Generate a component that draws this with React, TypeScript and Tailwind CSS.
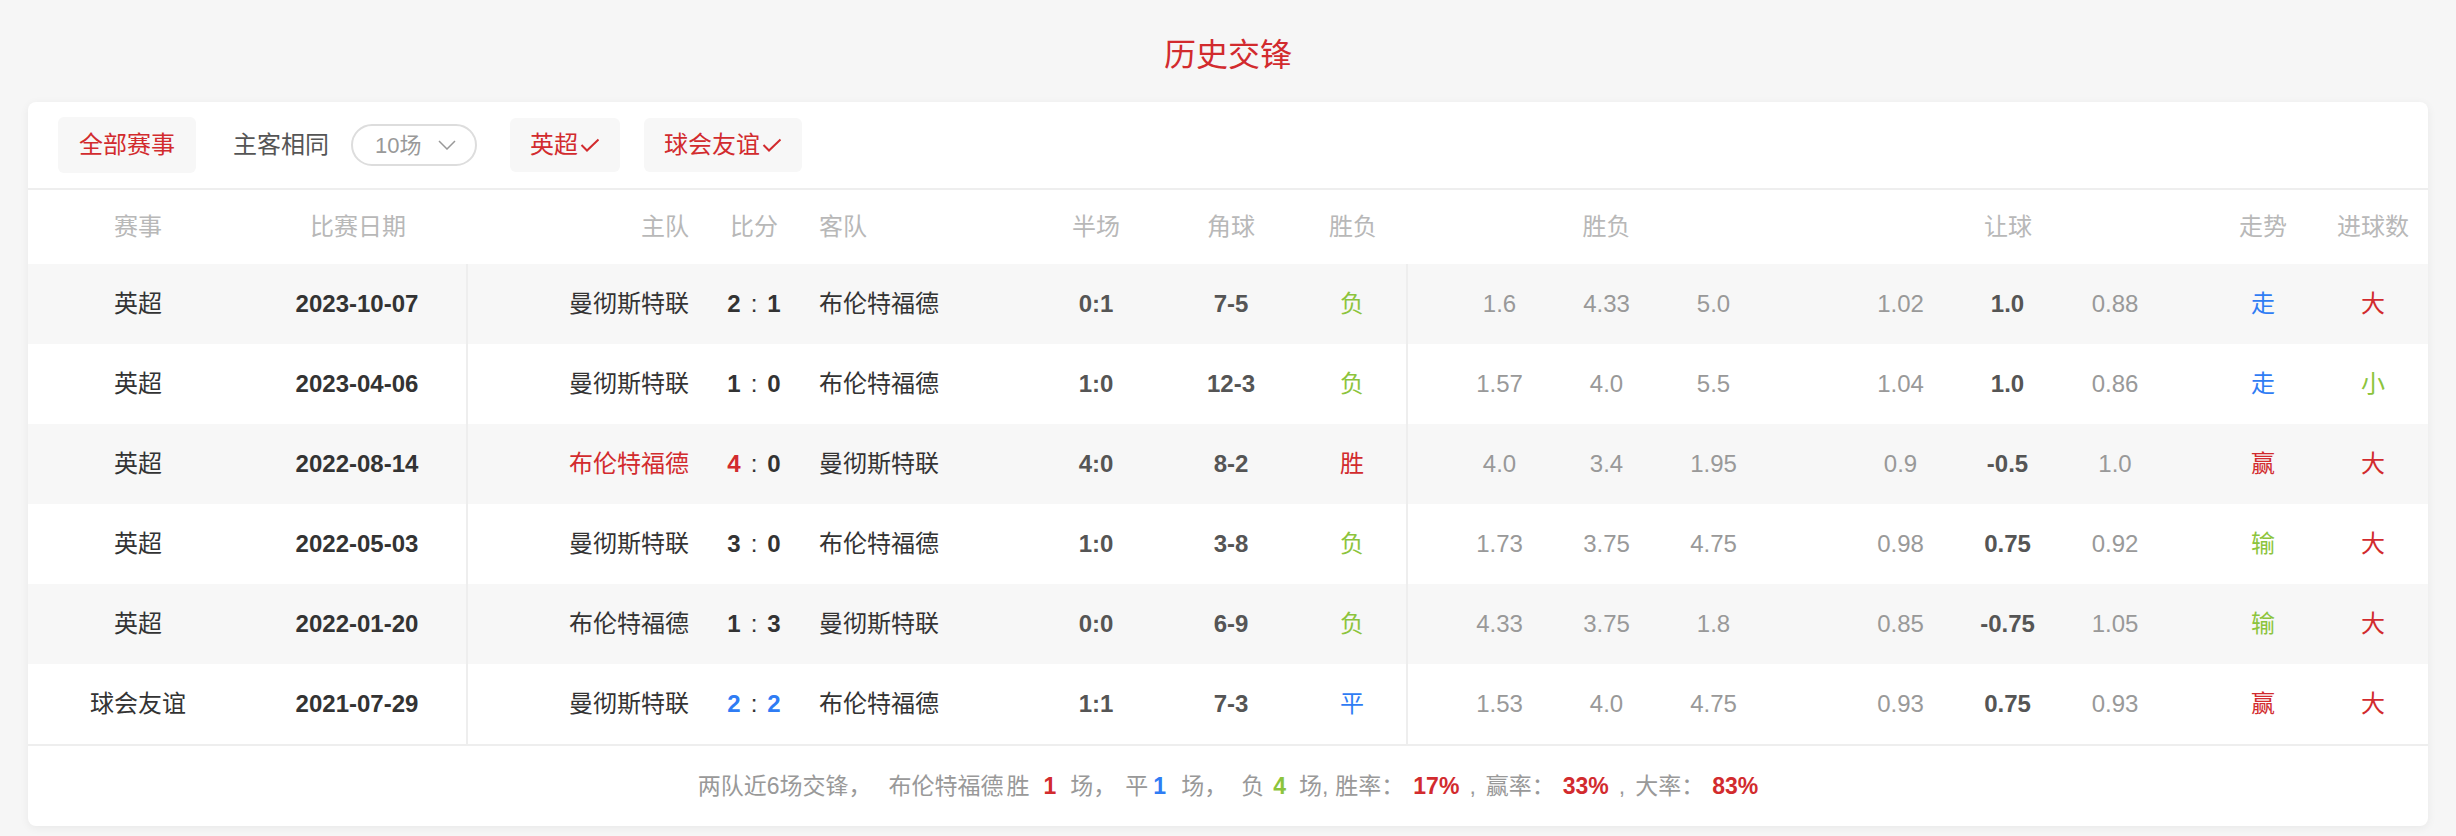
import type { ReactNode } from "react";
import clsx from "clsx";

const ROW = "grid grid-cols-[220px_220px_221px_130px_209px_136px_134px_110px_38px_107px_107px_107px_80px_107px_107px_108px_39px_110px_110px]";

const RED = "text-[#d22b2e]";
const GREEN = "text-[#8cc43c]";
const BLUE = "text-[#2f7cf4]";

type Match = {
    league: string
    date: string
    home: string
    away: string
    hs: number
    as: number
    half: string
    corner: string
    result: string
    odds: string[]
    handicap: string[]
    trend: string
    goals: string
    homeRed?: boolean
    draw?: boolean
}

const matches: Match[] = [
    { league: '英超', date: '2023-10-07', home: '曼彻斯特联', away: '布伦特福德', hs: 2, as: 1, half: '0:1', corner: '7-5', result: '负', odds: ['1.6', '4.33', '5.0'], handicap: ['1.02', '1.0', '0.88'], trend: '走', goals: '大' },
    { league: '英超', date: '2023-04-06', home: '曼彻斯特联', away: '布伦特福德', hs: 1, as: 0, half: '1:0', corner: '12-3', result: '负', odds: ['1.57', '4.0', '5.5'], handicap: ['1.04', '1.0', '0.86'], trend: '走', goals: '小' },
    { league: '英超', date: '2022-08-14', home: '布伦特福德', away: '曼彻斯特联', hs: 4, as: 0, half: '4:0', corner: '8-2', result: '胜', odds: ['4.0', '3.4', '1.95'], handicap: ['0.9', '-0.5', '1.0'], trend: '赢', goals: '大', homeRed: true },
    { league: '英超', date: '2022-05-03', home: '曼彻斯特联', away: '布伦特福德', hs: 3, as: 0, half: '1:0', corner: '3-8', result: '负', odds: ['1.73', '3.75', '4.75'], handicap: ['0.98', '0.75', '0.92'], trend: '输', goals: '大' },
    { league: '英超', date: '2022-01-20', home: '布伦特福德', away: '曼彻斯特联', hs: 1, as: 3, half: '0:0', corner: '6-9', result: '负', odds: ['4.33', '3.75', '1.8'], handicap: ['0.85', '-0.75', '1.05'], trend: '输', goals: '大' },
    { league: '球会友谊', date: '2021-07-29', home: '曼彻斯特联', away: '布伦特福德', hs: 2, as: 2, half: '1:1', corner: '7-3', result: '平', odds: ['1.53', '4.0', '4.75'], handicap: ['0.93', '0.75', '0.93'], trend: '赢', goals: '大', draw: true },
]

const tone = (s: string) => {
    if (s === '胜' || s === '赢' || s === '大') return RED
    if (s === '负' || s === '输' || s === '小') return GREEN
    return BLUE
}

function Cell({ children, className }: { children?: ReactNode, className?: string }) {
    return <div className={clsx("flex h-full items-center justify-center", className)}>{children}</div>
}

function Check() {
    return (
        <svg width="20" height="14" viewBox="0 0 20 14" className="ml-[2px]">
            <polyline points="1.5,7 7,12.5 18.5,1.5" fill="none" stroke="#d22b2e" strokeWidth="2" />
        </svg>
    )
}

export default function App() {
    return (
        <div className="min-h-[836px] bg-[#f6f6f6] pb-[10px] font-['Liberation_Sans','Noto_Sans_CJK_SC',sans-serif]">
            <h1 className="flex h-[102px] items-center justify-center pt-2 text-[32px] text-[#d22b2e]">历史交锋</h1>

            <div className="mx-[28px] overflow-hidden rounded-lg bg-white shadow-[0_2px_10px_rgba(0,0,0,0.06)]">

                {/* filters */}
                <div className="flex h-[88px] items-center border-b-2 border-[#eeeeee] pl-[30px] text-[24px]">
                    <button className="flex h-[56px] items-center rounded-md bg-[#f7f7f7] px-[21px] text-[#d22b2e]">全部赛事</button>
                    <span className="ml-[37px] text-[#555]">主客相同</span>
                    <div className="ml-[22px] flex h-[42px] w-[126px] items-center rounded-full border-2 border-[#dddddd] pl-[22px] text-[22px] text-[#999]">
                        10场
                        <svg width="18" height="10" viewBox="0 0 18 10" className="ml-[17px]">
                            <polyline points="1,1 9,9 17,1" fill="none" stroke="#999" strokeWidth="1.5" />
                        </svg>
                    </div>
                    <button className="ml-[33px] flex h-[54px] items-center rounded-md bg-[#f7f7f7] px-[20px] text-[#d22b2e]">英超<Check /></button>
                    <button className="ml-[24px] flex h-[54px] items-center rounded-md bg-[#f7f7f7] px-[20px] text-[#d22b2e]">球会友谊<Check /></button>
                </div>

                {/* header */}
                <div className={clsx(ROW, "h-[74px] text-[24px] text-[#b8b8b8]")}>
                    <Cell>赛事</Cell>
                    <Cell>比赛日期</Cell>
                    <Cell className="justify-end">主队</Cell>
                    <Cell>比分</Cell>
                    <Cell className="justify-start">客队</Cell>
                    <Cell>半场</Cell>
                    <Cell>角球</Cell>
                    <Cell>胜负</Cell>
                    <Cell />
                    <Cell className="col-span-3">胜负</Cell>
                    <Cell />
                    <Cell className="col-span-3">让球</Cell>
                    <Cell />
                    <Cell>走势</Cell>
                    <Cell>进球数</Cell>
                </div>

                {/* rows */}
                {matches.map((m, i) => (
                    <div key={m.date} className={clsx(ROW, "h-[80px] text-[24px] text-[#333]", i % 2 === 0 ? 'bg-[#f7f7f7]' : 'bg-white')}>
                        <Cell>{m.league}</Cell>
                        <Cell className="border-r-2 border-[#eeeeee] font-bold">{m.date}</Cell>
                        <Cell className={clsx("justify-end", m.homeRed && RED)}>{m.home}</Cell>
                        <Cell>
                            <span className={clsx("font-bold", m.homeRed && RED, m.draw && BLUE)}>{m.hs}</span>
                            <span className="mx-[10px]">:</span>
                            <span className={clsx("font-bold", m.draw && BLUE)}>{m.as}</span>
                        </Cell>
                        <Cell className="justify-start">{m.away}</Cell>
                        <Cell className="font-bold text-[#555]">{m.half}</Cell>
                        <Cell className="font-bold text-[#555]">{m.corner}</Cell>
                        <Cell className={clsx("border-r-2 border-[#eeeeee]", tone(m.result))}>{m.result}</Cell>
                        <Cell />
                        {m.odds.map((o, k) => (
                            <Cell key={k} className="text-[#999]">{o}</Cell>
                        ))}
                        <Cell />
                        {m.handicap.map((h, k) => (
                            <Cell key={k} className={k === 1 ? "font-bold text-[#555]" : "text-[#999]"}>{h}</Cell>
                        ))}
                        <Cell />
                        <Cell className={tone(m.trend)}>{m.trend}</Cell>
                        <Cell className={tone(m.goals)}>{m.goals}</Cell>
                    </div>
                ))}

                {/* summary */}
                <div className="flex h-[82px] items-center justify-center whitespace-pre border-t-2 border-[#eeeeee] text-[23px] text-[#999]">
                    <span>两队近6场交锋，</span>
                    <span className="ml-[17px]">布伦特福德</span>
                    <span className="ml-[3px]">胜</span>
                    <span className={clsx("mx-[14px] font-bold", RED)}>1</span>
                    <span>场，</span>
                    <span className="ml-[9px]">平</span>
                    <span className={clsx("ml-[5px] font-bold", BLUE)}>1</span>
                    <span className="ml-[15px]">场，</span>
                    <span className="ml-[14px]">负</span>
                    <span className={clsx("ml-[9px] font-bold", GREEN)}>4</span>
                    <span className="ml-[13px]">场,</span>
                    <span className="ml-[7px]">胜率：</span>
                    <span className={clsx("ml-[9px] font-bold", RED)}>17%</span>
                    <span className="ml-[10px]">,</span>
                    <span className="ml-[10px]">赢率：</span>
                    <span className={clsx("ml-[8px] font-bold", RED)}>33%</span>
                    <span className="ml-[10px]">,</span>
                    <span className="ml-[10px]">大率：</span>
                    <span className={clsx("ml-[8px] font-bold", RED)}>83%</span>
                </div>
            </div>
        </div>
    )
}
